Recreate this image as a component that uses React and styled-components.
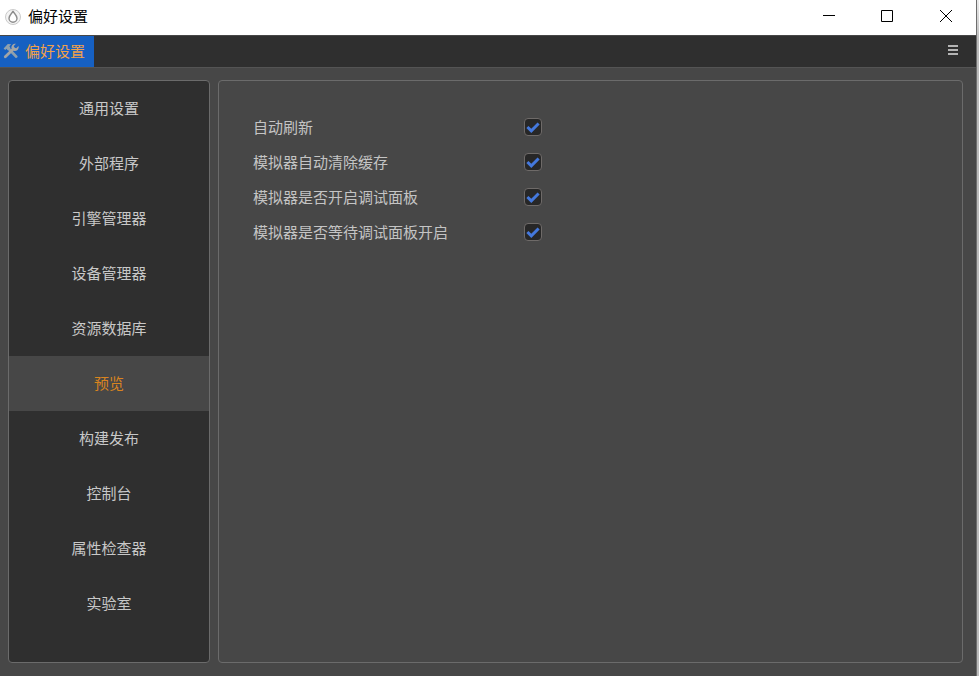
import styled, { createGlobalStyle } from "styled-components";

const GlobalStyle = createGlobalStyle`
  * {
    box-sizing: border-box;
  }

  body {
    margin: 0;
    overflow: hidden;
    font-family: "Noto Sans CJK SC", sans-serif;
    font-size: 15px;
  }
`;

const Screen = styled.div`
  width: 979px;
  height: 676px;
  background: linear-gradient(#ececec, #bdbdbd 40px);
`;

const Window = styled.div`
  display: flex;
  flex-direction: column;
  width: 977px;
  height: 676px;
  border-right: 1px solid #6e6e6e;
  background: #474747;
`;

const TitleBar = styled.header`
  display: flex;
  align-items: center;
  height: 35px;
  padding: 0 0 2px 5px;
  background: #fff;
  color: #000;
`;

const Title = styled.span`
  flex: 1;
  margin: 0 0 1px 7px;
  line-height: 20px;
`;

const Logo = styled.svg`
  display: block;
  width: 16px;
  height: 16px;
`;

const WindowButtons = styled.div`
  display: flex;
  align-self: flex-start;
  height: 32px;
  padding-right: 1px;
`;

const WindowButton = styled.button`
  display: flex;
  align-items: center;
  justify-content: center;
  width: 58.5px;
  padding: 0;
  border: 0;
  background: none;
`;

const TabBar = styled.div`
  display: flex;
  align-items: center;
  justify-content: space-between;
  height: 33px;
  padding-right: 18px;
  border-top: 1px solid #474747;
  border-bottom: 1px solid #545454;
  background: #2f2f2f;
`;

const Tab = styled.div`
  display: flex;
  align-items: center;
  gap: 6px;
  width: 94px;
  height: 31px;
  padding: 0 0 2px 3px;
  background: #1660c2;
  color: #f0a04a;
  line-height: 20px;
`;

const MenuIcon = styled.svg`
  display: block;
  margin-bottom: 3px;
`;

const Content = styled.main`
  display: flex;
  flex: 1;
  gap: 8px;
  padding: 12px 13px 13px 8px;
`;

const Sidebar = styled.nav`
  width: 202px;
  border: 1px solid #6b6b6b;
  border-radius: 4px;
  background: #2f2f2f;
`;

const SidebarItem = styled.div`
  height: 55px;
  line-height: 54px;
  text-align: center;
  color: ${({ $active }) => ($active ? "#d9841f" : "#c8c8c8")};
  background: ${({ $active }) => ($active ? "#474747" : "transparent")};
`;

const Panel = styled.section`
  flex: 1;
  padding: 28px 34px;
  border: 1px solid #6b6b6b;
  border-radius: 4px;
`;

const Row = styled.label`
  display: flex;
  align-items: center;
  height: 35px;
  color: #c4c4c4;
`;

const RowLabel = styled.span`
  width: 271px;
`;

const Checkbox = styled.span`
  display: flex;
  align-items: center;
  justify-content: center;
  width: 18px;
  height: 18px;
  border: 1px solid #6e6a68;
  border-radius: 4px;
  background: #272727;
`;

const tabs = [
  "通用设置",
  "外部程序",
  "引擎管理器",
  "设备管理器",
  "资源数据库",
  "预览",
  "构建发布",
  "控制台",
  "属性检查器",
  "实验室",
];

const options = [
  "自动刷新",
  "模拟器自动清除缓存",
  "模拟器是否开启调试面板",
  "模拟器是否等待调试面板开启",
];

const DropLogo = () => (
  <Logo viewBox="0 0 16 16" fill="none">
    <circle cx="8" cy="8" r="7.5" fill="#f4f4f4" stroke="#cacaca" />
    <path
      d="M8 1.8C7.5 4.2 4 6 4 9.2a4 4 0 0 0 8 0C12 6 8.5 4.2 8 1.8Z"
      fill="#fff"
      stroke="#8c8c8c"
      strokeWidth="1.4"
    />
  </Logo>
);

const ToolsIcon = () => (
  <Logo viewBox="0 0 16 16" fill="none">
    <path d="M5.5 5.5 13.2 13.6" stroke="#8fa0ad" strokeWidth="2.8" strokeLinecap="round" />
    <path d="M.6 5.4 4.8 1 8.2 1.3 6.4 3.2 7.4 5 5 7.4 3.6 5.7 2.2 7Z" fill="#8fa0ad" />
    <path d="M2.3 13.8 10.8 5.6" stroke="#a3a5a6" strokeWidth="2.8" strokeLinecap="round" />
    <path
      d="M12.9.8a3.7 3.7 0 0 0-4.3 4.8l2.1 2.1a3.7 3.7 0 0 0 4.8-4.6l-2.3 2.1-2-.5-.4-1.7Z"
      fill="#a3a5a6"
    />
  </Logo>
);

const CheckMark = () => (
  <svg width="14" height="12" viewBox="0 0 14 12" fill="none">
    <path d="M1.4 6 5.3 9.8 12.6 2.5" stroke="#4478dc" strokeWidth="3" />
  </svg>
);

export default function App() {
  return (
    <Screen>
      <GlobalStyle />
      <Window>
        <TitleBar>
          <DropLogo />
          <Title>偏好设置</Title>
          <WindowButtons>
            <WindowButton>
              <svg width="12" height="12" stroke="#000">
                <path d="M0 5.5h12" />
              </svg>
            </WindowButton>
            <WindowButton>
              <svg width="12" height="12" stroke="#000" fill="none">
                <path d="M.5.5h11v11H.5z" />
              </svg>
            </WindowButton>
            <WindowButton>
              <svg width="12" height="12" stroke="#000">
                <path d="M0 0 12 12M12 0 0 12" />
              </svg>
            </WindowButton>
          </WindowButtons>
        </TitleBar>
        <TabBar>
          <Tab>
            <ToolsIcon />
            偏好设置
          </Tab>
          <MenuIcon width="10" height="10" fill="#b4b4b4">
            <path d="M0 0h10v2H0zM0 4h10v2H0zM0 8h10v2H0z" />
          </MenuIcon>
        </TabBar>
        <Content>
          <Sidebar>
            {tabs.map((tab) => (
              <SidebarItem key={tab} $active={tab === "预览"}>
                {tab}
              </SidebarItem>
            ))}
          </Sidebar>
          <Panel>
            {options.map((option) => (
              <Row key={option}>
                <RowLabel>{option}</RowLabel>
                <Checkbox>
                  <CheckMark />
                </Checkbox>
              </Row>
            ))}
          </Panel>
        </Content>
      </Window>
    </Screen>
  );
}
